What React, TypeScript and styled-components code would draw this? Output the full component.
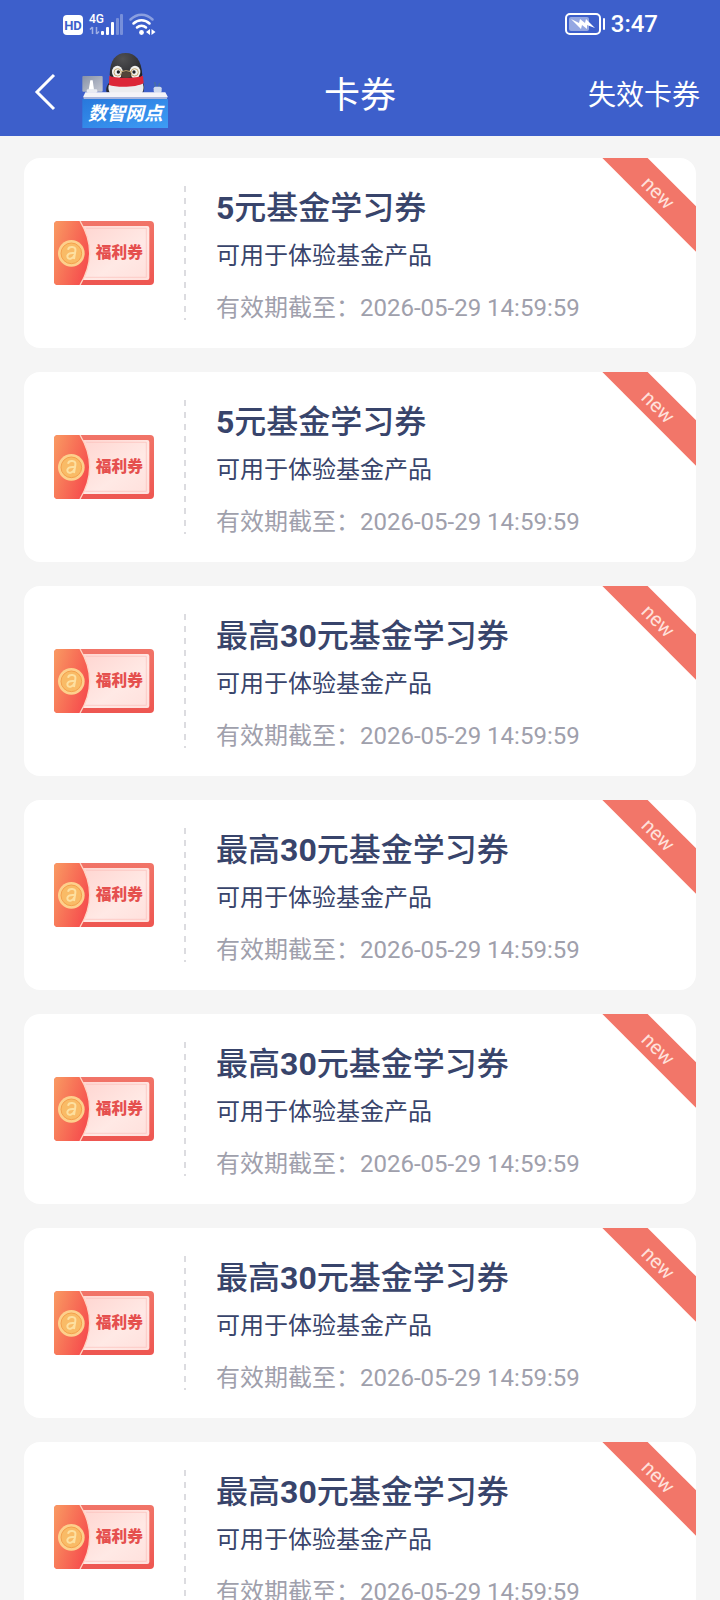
import styled, { createGlobalStyle } from "styled-components";

const colors = {
  brand: "#3d5fcb",
  page: "#f5f5f5",
  card: "#ffffff",
  navy: "#38446b",
  muted: "#9fa0ac",
  ribbon: "#f27669",
  dash: "#dcdce0",
};

const GlobalStyle = createGlobalStyle`
  * {
    box-sizing: border-box;
  }

  body {
    margin: 0;
    background: ${colors.page};
    font-family: Roboto, "Noto Sans CJK SC", sans-serif;
  }
`;

const Page = styled.div`
  display: flex;
  flex-direction: column;
  height: 100vh;
  overflow: hidden;
`;

const Header = styled.header`
  flex-shrink: 0;
  background: ${colors.brand};
  color: #ffffff;
`;

const StatusBar = styled.div`
  display: flex;
  align-items: center;
  justify-content: space-between;
  height: 48px;
  padding: 0 62px;
`;

const StatusGroup = styled.div`
  display: flex;
  align-items: center;
  gap: 6px;
`;

const Clock = styled.time`
  font-size: 24px;
  line-height: 28px;
  font-weight: 500;
`;

const NavBar = styled.nav`
  display: grid;
  grid-template-columns: 1fr auto 1fr;
  align-items: center;
  height: 88px;
  padding: 0 20px;
`;

const NavStart = styled.div`
  display: flex;
  align-items: center;
  gap: 24px;
  padding-left: 12px;
`;

const BackButton = styled.button`
  display: flex;
  padding: 0;
  border: none;
  background: transparent;
  color: inherit;
  cursor: pointer;
`;

const LogoSvg = styled.svg`
  display: block;
  margin-bottom: 4px;
`;

const PageTitle = styled.h1`
  margin: 0;
  padding-top: 8px;
  font-size: 36px;
  line-height: 44px;
  font-weight: 400;
`;

const ExpiredLink = styled.a`
  justify-self: end;
  padding-top: 8px;
  color: inherit;
  font-size: 28px;
  line-height: 40px;
  text-decoration: none;
`;

const CardList = styled.ul`
  flex: 1;
  display: flex;
  flex-direction: column;
  gap: 24px;
  margin: 0;
  padding: 22px 24px;
  overflow-y: auto;
  list-style: none;
  scrollbar-width: none;
`;

const Card = styled.li`
  position: relative;
  flex-shrink: 0;
  display: flex;
  align-items: stretch;
  padding: 28px 30px;
  border-radius: 16px;
  background: ${colors.card};
  overflow: hidden;
`;

const CardArt = styled.div`
  display: flex;
  align-items: center;
  padding-right: 30px;
`;

const Divider = styled.div`
  width: 2px;
  background: repeating-linear-gradient(
    to bottom,
    ${colors.dash} 0 6px,
    transparent 6px 12px
  );
`;

const CardBody = styled.div`
  flex: 1;
  padding-left: 30px;
`;

const CardTitle = styled.h2`
  margin: 0;
  color: ${colors.navy};
  font-size: 32px;
  line-height: 44px;
  font-weight: 500;
`;

const Amount = styled.span`
  font-weight: 700;
`;

const Description = styled.p`
  margin: 10px 0 24px;
  color: ${colors.navy};
  font-size: 24px;
  line-height: 32px;
`;

const Expiry = styled.p`
  margin: 0;
  color: ${colors.muted};
  font-size: 24px;
  line-height: 24px;
`;

const Ribbon = styled.span`
  position: absolute;
  top: 18px;
  right: -38px;
  width: 150px;
  padding-top: 2px;
  transform: rotate(45deg);
  background: ${colors.ribbon};
  color: #ffe1dc;
  font-size: 20px;
  line-height: 30px;
  text-align: center;
`;

const coupons = [
  { id: 1, prefix: "", amount: "5" },
  { id: 2, prefix: "", amount: "5" },
  { id: 3, prefix: "最高", amount: "30" },
  { id: 4, prefix: "最高", amount: "30" },
  { id: 5, prefix: "最高", amount: "30" },
  { id: 6, prefix: "最高", amount: "30" },
  { id: 7, prefix: "最高", amount: "30" },
];

function SignalIcons() {
  return (
    <svg width="94" height="28" viewBox="0 0 94 28" fill="#fff" aria-hidden>
      <rect x="1" y="5" width="20" height="20" rx="4" />
      <text x="11" y="20" fontSize="13" fontWeight="700" fill={colors.brand} textAnchor="middle">
        HD
      </text>
      <text x="27" y="13" fontSize="12" fontWeight="500">
        4G
      </text>
      <path d="M30.500 17v7M28 19.500l2.500-2.500M34.500 17v7M37 21.500l-2.500 2.500" stroke="#fff" strokeWidth="1.500" fill="none" opacity=".5" />
      <rect x="39" y="21" width="3" height="4" rx="1" />
      <rect x="44" y="17" width="3" height="8" rx="1" />
      <rect x="49" y="12" width="3" height="13" rx="1" />
      <rect x="54" y="8" width="3" height="17" rx="1" opacity=".3" />
      <rect x="58" y="4" width="3" height="21" rx="1" opacity=".3" />
      <g fill="none" stroke="#fff" strokeWidth="2.500" strokeLinecap="round">
        <path d="M68.500 9.500C75 3 84 3 90.500 9.500" opacity=".4" />
        <path d="M71.500 13.500c4.500-4.500 11.500-4.500 16 0" />
        <path d="M75 17.500c2.500-2.500 6.500-2.500 9 0" />
      </g>
      <circle cx="79.500" cy="22.500" r="2.400" />
      <path d="M88 19v6l-4-3zM89.500 19v6l4-3z" />
    </svg>
  );
}

function BatteryIcon() {
  return (
    <svg width="40" height="22" viewBox="0 0 40 22" aria-hidden>
      <rect x="1" y="1" width="34" height="20" rx="4" fill="none" stroke="#fff" strokeWidth="2" />
      <rect x="4" y="4" width="20" height="14" rx="2" fill="#fff" opacity=".45" />
      <path d="M6 6l8 4 1-4 5 4 1-4 9 9-8-3v4l-5-4-1 4z" fill="#fff" />
      <rect x="38" y="5" width="2" height="12" rx="1" fill="#fff" />
    </svg>
  );
}

function PenguinLogo() {
  return (
    <LogoSvg width="87" height="75" viewBox="0 0 261 225" role="img" aria-label="数智网点">
      <defs>
        <linearGradient id="sign" x1="0" x2="1" y1="0" y2="1">
          <stop offset="0" stopColor="#2878dc" />
          <stop offset="1" stopColor="#3e9cf5" />
        </linearGradient>
        <linearGradient id="screen" x1="0" x2="1" y1="0" y2="1">
          <stop offset="0" stopColor="#8791a7" />
          <stop offset="1" stopColor="#c5c9d3" />
        </linearGradient>
        <radialGradient id="head" cx=".4" cy=".2" r=".8">
          <stop offset="0" stopColor="#505052" />
          <stop offset="1" stopColor="#202126" />
        </radialGradient>
      </defs>
      {/* penguin */}
      <path d="M87 84c-12 8-17 24-13 34h22zM178 84c10 8 10 22 6 34h-22z" fill="#292a30" />
      <path d="M86 84h92c9 14 8 26 2 36H84c-7-10-6-24 2-36z" fill="#ececef" />
      <path d="M83 66C84 20 102 0 131 0s47 20 50 66c-14 30-84 30-98 0z" fill="url(#head)" />
      <ellipse cx="106" cy="57" rx="16" ry="19" fill="#f2f1ee" />
      <ellipse cx="159" cy="57" rx="16" ry="19" fill="#f2f1ee" />
      <path d="M120 55q13-6 26 0l3 18h-32z" fill="#3b3532" />
      <g fill="none" stroke="#c3a874" strokeWidth="3">
        <circle cx="107" cy="58" r="11" />
        <circle cx="158" cy="58" r="11" />
        <path d="M118 56q14-6 29 0" />
      </g>
      <circle cx="109" cy="57" r="5" fill="#202126" />
      <circle cx="156" cy="57" r="5" fill="#202126" />
      <path d="M82 68c16 8 82 8 101 0l2 22c-20 14-82 14-104 6z" fill="#dc2638" />
      <ellipse cx="132" cy="65" rx="14" ry="9" fill="#534438" />
      {/* monitor, cup and desk */}
      <rect x="1" y="69" width="61" height="47" rx="3" fill="url(#screen)" />
      <path d="M25 82h7l4 28H20z" fill="#fff" />
      <rect x="14" y="109" width="32" height="10" rx="4" fill="#e9ebf2" />
      <path d="M221 103l-3-16M229 103l4-13" stroke="#47719c" strokeWidth="4" />
      <rect x="215" y="101" width="24" height="18" rx="5" fill="#ced9ee" />
      <path d="M10 118h240l8 15H3z" fill="#f4f3f8" />
      <rect x="5" y="132" width="250" height="7" fill="#a9b5dc" />
      <rect x="1" y="138" width="257" height="87" fill="url(#sign)" />
      <text x="130" y="202" textAnchor="middle" fontSize="56" fontWeight="700" fontStyle="italic" fill="#fff">
        数智网点
      </text>
    </LogoSvg>
  );
}

function CouponArt() {
  return (
    <svg width="100" height="64" viewBox="0 0 300 192" role="img" aria-label="福利券">
      <defs>
        <linearGradient id="frame" x1="0" x2="0" y1="0" y2="1">
          <stop offset="0" stopColor="#f17468" />
          <stop offset="1" stopColor="#ee5651" />
        </linearGradient>
        <linearGradient id="flap" x1="0" x2="1" y1="0" y2=".5">
          <stop offset="0" stopColor="#f99a62" />
          <stop offset="1" stopColor="#f6504e" />
        </linearGradient>
        <linearGradient id="paper" x1="0" x2="1" y1="0" y2="1">
          <stop offset="0" stopColor="#ffd5d0" />
          <stop offset=".6" stopColor="#ffe9e5" />
          <stop offset="1" stopColor="#ffe0dc" />
        </linearGradient>
      </defs>
      <rect width="300" height="192" rx="12" fill="url(#frame)" />
      <path d="M78 15h202q6 0 6 6v150q0 6-6 6H78q54-81 0-162z" fill="url(#paper)" />
      <path d="M96 22h181v147H94" fill="none" stroke="#fbc0ba" strokeWidth="2" />
      <path d="M12 0h66q58 96 0 192H12q-12 0-12-12V12Q0 0 12 0z" fill="url(#flap)" />
      <path d="M78 0q58 96 0 192" fill="none" stroke="#ffd3c2" strokeWidth="4" />
      <circle cx="52" cy="97" r="40" fill="#fdd08c" />
      <circle cx="52" cy="97" r="31" fill="#f9bb66" stroke="#f4a04c" strokeWidth="3" />
      <path d="M42 86q2-9 13-8 11 1 9 12l-4 24M61 96q-19-2-21 9 0 10 10 8 8-2 11-10" fill="none" stroke="#fde0a0" strokeWidth="6" />
      <text x="196" y="112" textAnchor="middle" fontSize="47" fontWeight="900" fill="#e5504e">
        福利券
      </text>
    </svg>
  );
}

export default function App() {
  return (
    <>
      <GlobalStyle />
      <Page>
        <Header>
          <StatusBar>
            <SignalIcons />
            <StatusGroup>
              <BatteryIcon />
              <Clock>3:47</Clock>
            </StatusGroup>
          </StatusBar>
          <NavBar>
            <NavStart>
              <BackButton type="button" aria-label="返回">
                <svg width="26" height="40" viewBox="0 0 26 40" fill="none" stroke="currentColor" strokeWidth="3">
                  <path d="M22 3L5 20l17 17" />
                </svg>
              </BackButton>
              <PenguinLogo />
            </NavStart>
            <PageTitle>卡券</PageTitle>
            <ExpiredLink href="#expired">失效卡券</ExpiredLink>
          </NavBar>
        </Header>
        <CardList>
          {coupons.map((coupon) => (
            <Card key={coupon.id}>
              <CardArt>
                <CouponArt />
              </CardArt>
              <Divider />
              <CardBody>
                <CardTitle>
                  {coupon.prefix}
                  <Amount>{coupon.amount}</Amount>
                  元基金学习券
                </CardTitle>
                <Description>可用于体验基金产品</Description>
                <Expiry>有效期截至：2026-05-29 14:59:59</Expiry>
              </CardBody>
              <Ribbon>new</Ribbon>
            </Card>
          ))}
        </CardList>
      </Page>
    </>
  );
}
